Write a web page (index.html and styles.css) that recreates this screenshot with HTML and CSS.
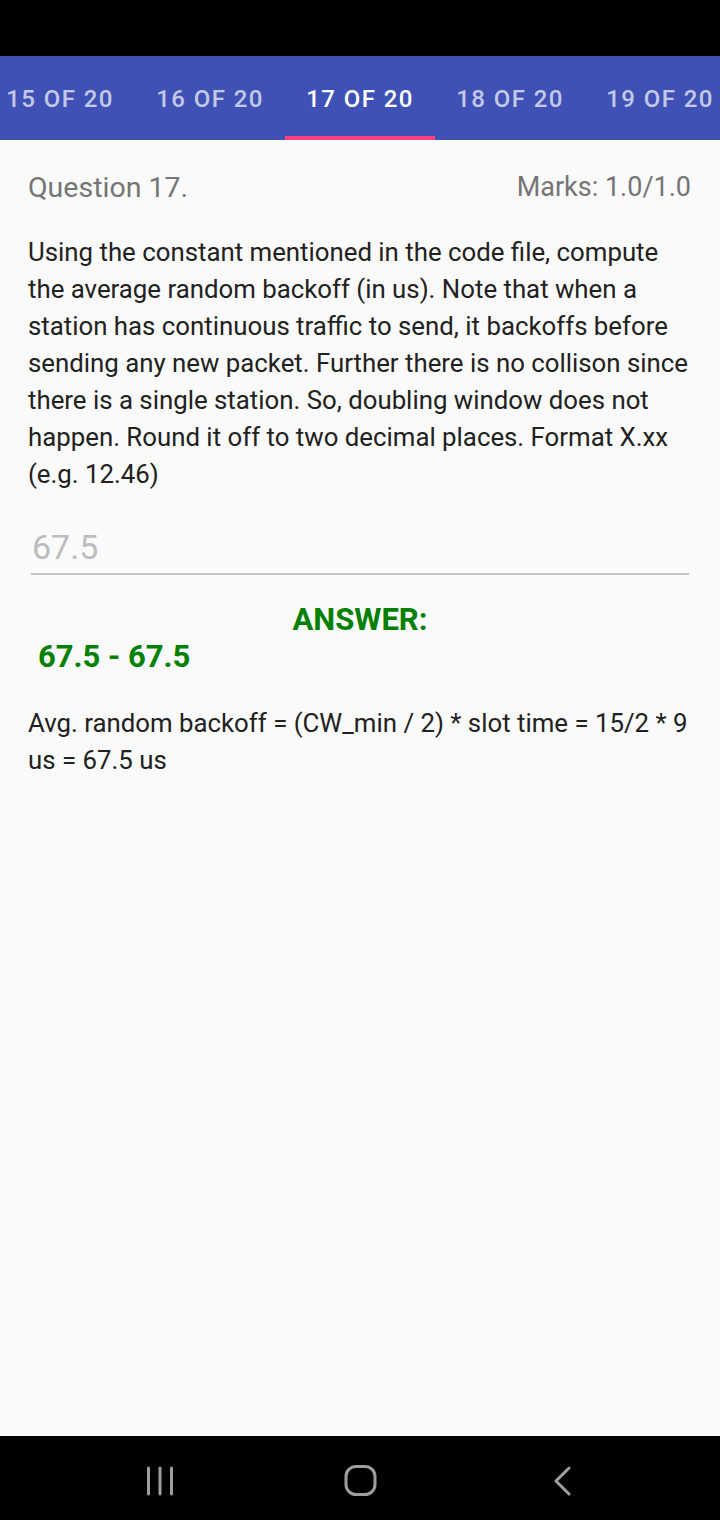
FILE: index.html
```html
<!DOCTYPE html>
<html>
<head>
<meta charset="utf-8">
<link rel="stylesheet" href="styles.css">
</head>
<body>
<div class="screen">
  <div class="statusbar"></div>
  <div class="tabs">
    <div class="tab">15 OF 20</div>
    <div class="tab">16 OF 20</div>
    <div class="tab active">17 OF 20</div>
    <div class="tab">18 OF 20</div>
    <div class="tab">19 OF 20</div>
  </div>
  <main class="content">
    <div class="qhead">
      <span class="qtitle">Question 17.</span>
      <span class="marks">Marks: 1.0/1.0</span>
    </div>
    <p class="qtext">Using the constant mentioned in the code file, compute the average random backoff (in us). Note that when a station has continuous traffic to send, it backoffs before sending any new packet. Further there is no collison since there is a single station. So, doubling window does not happen. Round it off to two decimal places. Format X.xx (e.g. 12.46)</p>
    <div class="field">67.5</div>
    <div class="answer-label">ANSWER:</div>
    <div class="answer-value">67.5 - 67.5</div>
    <p class="explain">Avg. random backoff = (CW_min / 2) * slot time = 15/2 * 9 us = 67.5 us</p>
  </main>
  <div class="navbar">
    <svg class="nav-recent" width="28" height="30" viewBox="0 0 28 30"><g stroke="#9e9e9e" stroke-width="3" stroke-linecap="round"><line x1="2.5" y1="2" x2="2.5" y2="28"/><line x1="14" y1="2" x2="14" y2="28"/><line x1="25.5" y1="2" x2="25.5" y2="28"/></g></svg>
    <svg class="nav-home" width="34" height="32" viewBox="0 0 34 32"><rect x="2" y="1.5" width="29" height="28" rx="10" fill="none" stroke="#9e9e9e" stroke-width="3"/></svg>
    <svg class="nav-back" width="22" height="30" viewBox="0 0 22 30"><polyline points="17,2 4,15 17,28" fill="none" stroke="#9e9e9e" stroke-width="3" stroke-linecap="round" stroke-linejoin="round"/></svg>
  </div>
</div>
</body>
</html>
```
FILE: styles.css
```css
* { box-sizing: border-box; }
html, body { margin: 0; padding: 0; }
body {
  width: 720px;
  height: 1520px;
  background: #fafafa;
  font-family: Roboto, "Noto Sans", sans-serif;
  overflow: hidden;
}
.screen {
  display: flex;
  flex-direction: column;
  height: 1520px;
}
.statusbar {
  height: 56px;
  background: #000;
  flex: none;
}
.tabs {
  height: 84px;
  background: #3f51b5;
  display: flex;
  flex: none;
  margin-left: -15px;
  width: 750px;
}
.tab {
  width: 150px;
  flex: none;
  display: flex;
  align-items: center;
  justify-content: center;
  color: rgba(255,255,255,0.7);
  font-size: 24px;
  font-weight: 500;
  letter-spacing: 1.4px;
  border-bottom: 4px solid transparent;
  padding-top: 6px;
}
.tab.active {
  color: #fff;
  border-bottom-color: #ff4081;
}
.content {
  flex: 1;
  padding: 0 28px;
}
.qhead {
  display: flex;
  justify-content: space-between;
  align-items: center;
  margin-top: 30px;
  height: 34px;
  color: #757575;
}
.qtitle { font-size: 28.5px; }
.marks { font-size: 27px; margin-right: 1px; }
.qtext {
  margin: 30px 0 0;
  font-size: 25.8px;
  line-height: 37px;
  color: #212121;
}
.field {
  margin: 30px 3px 0 3px;
  font-size: 34px;
  color: #bdbdbd;
  font-weight: 400;
  height: 52px;
  line-height: 48px;
  border-bottom: 2px solid #c4c4c4;
  padding-left: 1px;
}
.answer-label {
  margin-top: 27px;
  text-align: center;
  color: #008000;
  font-weight: 700;
  font-size: 31px;
  line-height: 36px;
}
.answer-value {
  margin-top: 1px;
  padding-left: 10px;
  color: #008000;
  font-weight: 700;
  font-size: 31px;
  line-height: 36px;
}
.explain {
  margin: 30px 0 0;
  font-size: 25.8px;
  line-height: 37px;
  color: #212121;
}
.navbar {
  height: 84px;
  flex: none;
  background: #000;
  display: flex;
  align-items: center;
  padding: 5px 0 0 146px;
}
.nav-home { margin-left: 170px; }
.nav-back { margin-left: 174px; }
```
